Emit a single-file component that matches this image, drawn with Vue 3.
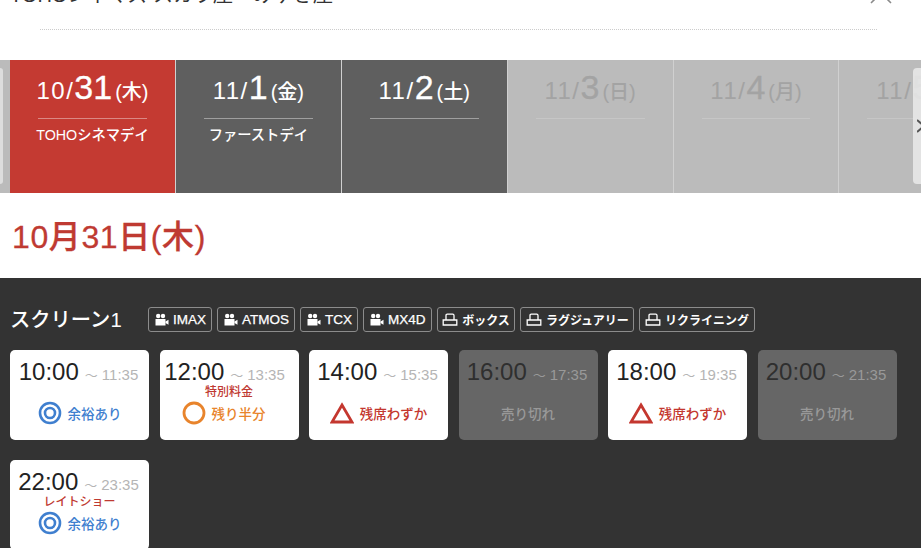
<script setup>
const dates = [
  { md: '10/', day: '31', week: '(木)', note: 'TOHOシネマデイ', state: 'today' },
  { md: '11/', day: '1', week: '(金)', note: 'ファーストデイ', state: 'open' },
  { md: '11/', day: '2', week: '(土)', note: '', state: 'open' },
  { md: '11/', day: '3', week: '(日)', note: '', state: 'off' },
  { md: '11/', day: '4', week: '(月)', note: '', state: 'off' },
  { md: '11/', day: '5', week: '(火)', note: '', state: 'off' },
]

const tags = [
  { label: 'IMAX', icon: 'cam' },
  { label: 'ATMOS', icon: 'cam' },
  { label: 'TCX', icon: 'cam' },
  { label: 'MX4D', icon: 'cam' },
  { label: 'ボックス', icon: 'seat' },
  { label: 'ラグジュアリー', icon: 'seat' },
  { label: 'リクライニング', icon: 'seat' },
]

const shows = [
  { start: '10:00', end: '11:35', status: 'many', text: '余裕あり' },
  { start: '12:00', end: '13:35', status: 'half', text: '残り半分', note: '特別料金' },
  { start: '14:00', end: '15:35', status: 'few', text: '残席わずか' },
  { start: '16:00', end: '17:35', status: 'sold', text: '売り切れ' },
  { start: '18:00', end: '19:35', status: 'few', text: '残席わずか' },
  { start: '20:00', end: '21:35', status: 'sold', text: '売り切れ' },
  { start: '22:00', end: '23:35', status: 'many', text: '余裕あり', note: 'レイトショー' },
]
</script>

<template>
  <div class="page">
    <header class="head">
      <h1 class="title">TOHOシネマズ スカラ座・みゆき座</h1>
      <svg class="close" width="24" height="24" viewBox="0 0 24 24">
        <path d="M2 2 L22 22 M22 2 L2 22" stroke="#8a8a8a" stroke-width="1.6" fill="none" />
      </svg>
    </header>
    <div class="dots"></div>

    <div class="dates">
      <div class="arrow left"></div>
      <div v-for="d in dates" :key="d.day" class="date" :class="d.state">
        <div class="date-top">
          <span class="md">{{ d.md }}</span><span class="day">{{ d.day }}</span><span class="week">{{ d.week }}</span>
        </div>
        <div class="date-note">{{ d.note }}</div>
      </div>
      <div class="arrow right">
        <svg width="8" height="14" viewBox="0 0 8 14">
          <path d="M0 1 L7 7 L0 13" stroke="#555" stroke-width="2" fill="none" />
        </svg>
      </div>
    </div>

    <h2 class="picked">10月31日(木)</h2>

    <section class="screen">
      <div class="screen-head">
        <span class="screen-name">スクリーン1</span>
        <div class="tags">
          <span v-for="t in tags" :key="t.label" class="tag" :class="t.icon">
            <svg v-if="t.icon === 'cam'" width="15" height="14" viewBox="0 0 15 14">
              <circle cx="4.2" cy="3" r="2.2" fill="#fff" />
              <circle cx="9" cy="3" r="2.2" fill="#fff" />
              <rect x="1.5" y="6" width="10" height="6.5" fill="#fff" />
              <path d="M11.5 8.5 L14.5 6.8 V11.8 L11.5 10 Z" fill="#fff" />
            </svg>
            <svg v-else width="16" height="14" viewBox="0 0 16 14">
              <path d="M4 7 V2.5 Q4 1.2 5.3 1.2 H10.7 Q12 1.2 12 2.5 V7 M1.2 7 H14.8 V12 H1.2 Z" stroke="#fff" stroke-width="1.3" fill="none" />
            </svg>
            {{ t.label }}
          </span>
        </div>
      </div>

      <div class="shows">
        <div v-for="s in shows" :key="s.start" class="show" :class="[{ sold: s.status === 'sold' }, s.status]">
          <div class="times">
            <span class="start">{{ s.start }}</span>
            <span class="tilde">〜</span>
            <span class="end">{{ s.end }}</span>
          </div>
          <div v-if="s.note" class="show-note">{{ s.note }}</div>
          <div class="status" :class="s.status">
            <svg v-if="s.status === 'many'" width="24" height="24" viewBox="0 0 24 24">
              <circle cx="12" cy="12" r="10" stroke="#3f7fcf" stroke-width="2.6" fill="none" />
              <circle cx="12" cy="12" r="5" stroke="#3f7fcf" stroke-width="2.6" fill="none" />
            </svg>
            <svg v-else-if="s.status === 'half'" width="24" height="24" viewBox="0 0 24 24">
              <circle cx="12" cy="12" r="10" stroke="#e8842c" stroke-width="2.8" fill="none" />
            </svg>
            <svg v-else-if="s.status === 'few'" width="24" height="22" viewBox="0 0 24 22">
              <path d="M12 3 L22 20 H2 Z" stroke="#c4372f" stroke-width="2.8" fill="none" />
            </svg>
            <span>{{ s.text }}</span>
          </div>
        </div>
      </div>
    </section>
  </div>
</template>

<style>
html, body {
  margin: 0;
  overflow: hidden;
  background: #fff;
}
</style>

<style scoped>
.page {
  width: 921px;
  height: 548px;
  overflow: hidden;
  font-family: "Liberation Sans", "Noto Sans CJK JP", sans-serif;
}

.head {
  height: 29px;
  padding: 0 28px 0 10px;
  display: flex;
  justify-content: space-between;
  align-items: flex-end;
}

.title {
  margin: 0 0 24px;
  font-size: 20px;
  font-weight: 400;
  line-height: 20px;
  color: #333;
  white-space: nowrap;
}

.close {
  margin-bottom: 24px;
}

.dots {
  height: 0;
  margin: 0 44px 0 40px;
  border-top: 1px dotted #ccc;
}

.dates {
  position: relative;
  margin-top: 30px;
  height: 133px;
  padding-left: 10px;
  display: flex;
  background: #bbb;
  overflow: hidden;
}

.date {
  flex: 0 0 165.9px;
  min-width: 0;
  box-sizing: border-box;
  border-right: 1px solid #d0d0d0;
  color: #fff;
}

.date.today { background: #c43a32; }
.date.open { background: #5f5f5f; }
.date.off { background: #bbb; color: #a3a3a3; }

.date-top {
  height: 58px;
  margin: 0 28px;
  display: flex;
  justify-content: center;
  align-items: baseline;
  line-height: 54px;
  white-space: nowrap;
  border-bottom: 1px solid rgba(255, 255, 255, 0.4);
}

.date.off .date-top { border-bottom-color: #c6c6c6; }

.md {
  font-size: 24px;
  letter-spacing: 1.5px;
}

.day {
  font-size: 34px;
  -webkit-text-stroke: 0.3px currentColor;
}

.week {
  margin-left: 3px;
  font-size: 20px;
  font-weight: 500;
}

.date-note {
  margin-top: 7px;
  display: flex;
  justify-content: center;
  font-size: 14.3px;
  font-weight: 500;
  line-height: 18px;
  white-space: nowrap;
}

.arrow {
  position: absolute;
  top: 8px;
  height: 116px;
  border-radius: 4px;
}

.arrow.left {
  left: -3px;
  width: 6px;
  background: #ddd;
}

.arrow.right {
  right: 0;
  width: 8px;
  display: flex;
  align-items: center;
  padding-left: 4px;
  box-sizing: border-box;
  background: rgba(232, 232, 232, 0.88);
  border-radius: 4px 0 0 4px;
}

.arrow.right svg {
  flex-shrink: 0;
}

.picked {
  margin: 0;
  height: 85px;
  padding-left: 12px;
  font-size: 32px;
  font-weight: 500;
  line-height: 89px;
  letter-spacing: 0.6px;
  color: #bf3a32;
  -webkit-text-stroke: 0.3px #bf3a32;
}

.screen {
  background: #333;
  height: 270px;
  padding: 29px 10px 0;
  box-sizing: border-box;
}

.screen-head {
  display: flex;
  align-items: center;
  height: 25px;
}

.screen-name {
  width: 138px;
  margin-top: 2px;
  font-size: 20.3px;
  font-weight: 500;
  line-height: 25px;
  color: #fff;
  white-space: nowrap;
}

.tags {
  display: flex;
  gap: 5px;
}

.tag {
  display: flex;
  align-items: center;
  gap: 4px;
  height: 25px;
  padding: 0 4.6px;
  box-sizing: border-box;
  border: 1px solid #8c8c8c;
  border-radius: 3px;
  font-size: 12px;
  font-weight: 700;
  color: #fff;
  white-space: nowrap;
}

.tag.cam {
  padding: 0 5px;
  font-size: 13.5px;
  font-weight: 400;
  -webkit-text-stroke: 0.25px #fff;
}

.shows {
  margin-top: 18px;
  display: grid;
  grid-template-columns: repeat(6, 139px);
  column-gap: 10.5px;
  row-gap: 20px;
}

.show {
  position: relative;
  height: 90px;
  padding: 9px 2px 0 0;
  box-sizing: border-box;
  background: #fff;
  border-radius: 5px;
}

.show.half {
  padding-right: 9px;
}

.show.sold {
  background: #666;
}

.times {
  display: flex;
  justify-content: center;
  align-items: baseline;
  white-space: nowrap;
}

.start {
  font-size: 24px;
  line-height: 26px;
  color: #222;
}

.tilde {
  margin: 0 4px 0 6px;
  font-size: 13px;
  color: #b5b5b5;
}

.end {
  font-size: 15px;
  color: #b5b5b5;
}

.show.sold .start { color: #2f2f2f; }
.show.sold .tilde,
.show.sold .end { color: #999; }

.show-note {
  position: absolute;
  left: 0;
  right: 0;
  top: 35px;
  text-align: center;
  font-size: 12px;
  font-weight: 500;
  line-height: 14px;
  color: #bf3a32;
}

.status {
  position: absolute;
  left: 0;
  right: 0;
  top: 51px;
  display: flex;
  align-items: center;
  justify-content: center;
  gap: 6px;
  height: 24px;
  font-size: 13.5px;
  font-weight: 500;
}

.status.many { color: #3f7fcf; }
.status.half { color: #e8842c; padding-right: 11px; }
.status.few { color: #c4372f; }
.status.sold { color: #999; }
</style>
